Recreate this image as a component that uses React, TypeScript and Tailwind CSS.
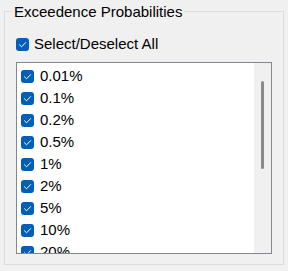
import React from 'react';

const probabilities = ['0.01%', '0.1%', '0.2%', '0.5%', '1%', '2%', '5%', '10%', '20%'];

const CheckBox: React.FC = () => (
  <svg width="13" height="13" viewBox="0 0 13 13" className="shrink-0">
    <rect x="0" y="0" width="13" height="13" rx="3" fill="#005fb8" />
    <polyline points="3.5,6.8 5.6,8.8 9.6,4.6" fill="none" stroke="#ffffff" strokeWidth="1" strokeLinecap="round" strokeLinejoin="round" />
  </svg>
);

export default function App() {
  return (
    <div className="w-[288px] h-[271px] bg-[#f0f0f0] overflow-hidden text-black" style={{ fontFamily: '"Liberation Sans", Arial, sans-serif' }}>
      <fieldset className="ml-[4px] w-[280px] h-[265px] border border-[#dcdcdc] p-0 m-0">
        <legend className="ml-[7px] px-[2px] text-[15px] leading-[23px]">Exceedence Probabilities</legend>

        <div className="mt-[10px] ml-[11px] h-[22px] flex items-center gap-[5px] text-[15px]">
          <CheckBox />
          <span>Select/Deselect All</span>
        </div>

        <div className="mt-[7px] ml-[11px] w-[256px] h-[192px] border border-[#828790] bg-white flex">
          <div className="flex-1 overflow-hidden pt-[2px] pl-[4px]">
            {probabilities.map((p) => (
              <div key={p} className="h-[22px] flex items-center gap-[6px] text-[15px]">
                <CheckBox />
                <span>{p}</span>
              </div>
            ))}
          </div>
          <div className="w-[17px] bg-[#f0f0f0] flex justify-center pt-[18px]">
            <div className="w-[3px] h-[88px] rounded-full bg-[#8a8a8a]" />
          </div>
        </div>
      </fieldset>
    </div>
  );
}
